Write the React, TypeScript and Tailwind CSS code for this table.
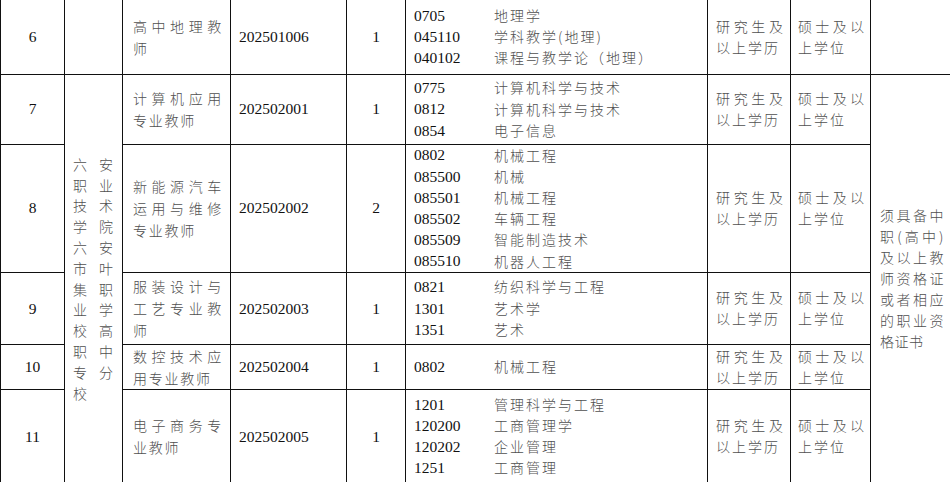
import React from "react";

type Row = {
  no: string;
  pos: string;
  code: string;
  count: string;
  majors: [string, string][];
  h: string;
};

const rows: Row[] = [
  {
    no: "6",
    pos: "高中地理教师",
    code: "202501006",
    count: "1",
    majors: [
      ["0705", "地理学"],
      ["045110", "学科教学(地理)"],
      ["040102", "课程与教学论（地理）"],
    ],
    h: "h-[74px]",
  },
  {
    no: "7",
    pos: "计算机应用专业教师",
    code: "202502001",
    count: "1",
    majors: [
      ["0775", "计算机科学与技术"],
      ["0812", "计算机科学与技术"],
      ["0854", "电子信息"],
    ],
    h: "h-[70px]",
  },
  {
    no: "8",
    pos: "新能源汽车运用与维修专业教师",
    code: "202502002",
    count: "2",
    majors: [
      ["0802", "机械工程"],
      ["085500", "机械"],
      ["085501", "机械工程"],
      ["085502", "车辆工程"],
      ["085509", "智能制造技术"],
      ["085510", "机器人工程"],
    ],
    h: "h-[128px]",
  },
  {
    no: "9",
    pos: "服装设计与工艺专业教师",
    code: "202502003",
    count: "1",
    majors: [
      ["0821", "纺织科学与工程"],
      ["1301", "艺术学"],
      ["1351", "艺术"],
    ],
    h: "h-[72px]",
  },
  {
    no: "10",
    pos: "数控技术应用专业教师",
    code: "202502004",
    count: "1",
    majors: [["0802", "机械工程"]],
    h: "h-[43px]",
  },
  {
    no: "11",
    pos: "电子商务专业教师",
    code: "202502005",
    count: "1",
    majors: [
      ["1201", "管理科学与工程"],
      ["120200", "工商管理学"],
      ["120202", "企业管理"],
      ["1251", "工商管理"],
    ],
    h: "h-[94px]",
  },
];

const cjk = "font-['Noto_Sans_CJK_SC',sans-serif] font-light text-[#505050] text-[14px]";
const serif = "font-['Liberation_Serif','Noto_Sans_CJK_SC',serif] text-[15.5px] text-[#111]";
const cell = "border border-[#111] p-0 align-middle";

export default function App() {
  return (
    <div className="w-[950px] h-[482px] overflow-hidden bg-white">
      <table className="w-[950px] table-fixed border-collapse">
        <colgroup>
          <col className="w-[64px]" />
          <col className="w-[58px]" />
          <col className="w-[108px]" />
          <col className="w-[116px]" />
          <col className="w-[59px]" />
          <col className="w-[302px]" />
          <col className="w-[83px]" />
          <col className="w-[80px]" />
          <col className="w-[80px]" />
        </colgroup>
        <tbody>
          {rows.map((r, i) => (
            <tr key={r.no} className={r.h}>
              <td className={`${cell} ${serif} text-center ${i === 0 ? "border-t-0" : ""}`}>{r.no}</td>
              {i === 0 && <td className={`${cell} border-t-0`} />}
              {i === 1 && (
                <td rowSpan={5} className={cell}>
                  <div className={`${cjk} ml-[8px] w-[42px] text-justify leading-[20.8px] tracking-[2px]`}>
                    六安职业技术学院六安市叶集职业学校高职中专分校
                  </div>
                </td>
              )}
              <td className={`${cell} ${i === 0 ? "border-t-0" : ""}`}>
                <div className={`${cjk} ml-[10px] w-[90px] text-justify leading-[22px] tracking-[1.75px]`}>
                  {r.pos}
                </div>
              </td>
              <td className={`${cell} ${serif} pl-[8px] ${i === 0 ? "border-t-0" : ""}`}>{r.code}</td>
              <td className={`${cell} ${serif} text-center ${i === 0 ? "border-t-0" : ""}`}>{r.count}</td>
              <td className={`${cell} pl-[8px] ${i === 0 ? "border-t-0" : ""}`}>
                {r.majors.map(([c, name], k) => (
                  <div key={k} className="flex h-[21.2px] items-center">
                    <span className={`${serif} w-[80px]`}>{c}</span>
                    <span className={`${cjk} tracking-[2px]`}>{name}</span>
                  </div>
                ))}
              </td>
              <td className={`${cell} ${i === 0 ? "border-t-0" : ""}`}>
                <div className={`${cjk} ml-[8px] w-[69px] text-justify leading-[21px] tracking-[2px]`}>
                  研究生及以上学历
                </div>
              </td>
              <td className={`${cell} ${i === 0 ? "border-t-0" : ""}`}>
                <div className={`${cjk} ml-[7px] w-[68px] text-justify leading-[21px] tracking-[2px]`}>
                  硕士及以上学位
                </div>
              </td>
              {i === 0 && <td className={`${cell} border-t-0`} />}
              {i === 1 && (
                <td rowSpan={5} className={cell}>
                  <div className={`${cjk} ml-[9px] w-[64px] text-justify leading-[21px] tracking-[0.5px]`}>
                    须具备中职(高中)及以上教师资格证或者相应的职业资格证书
                  </div>
                </td>
              )}
            </tr>
          ))}
        </tbody>
      </table>
    </div>
  );
}
